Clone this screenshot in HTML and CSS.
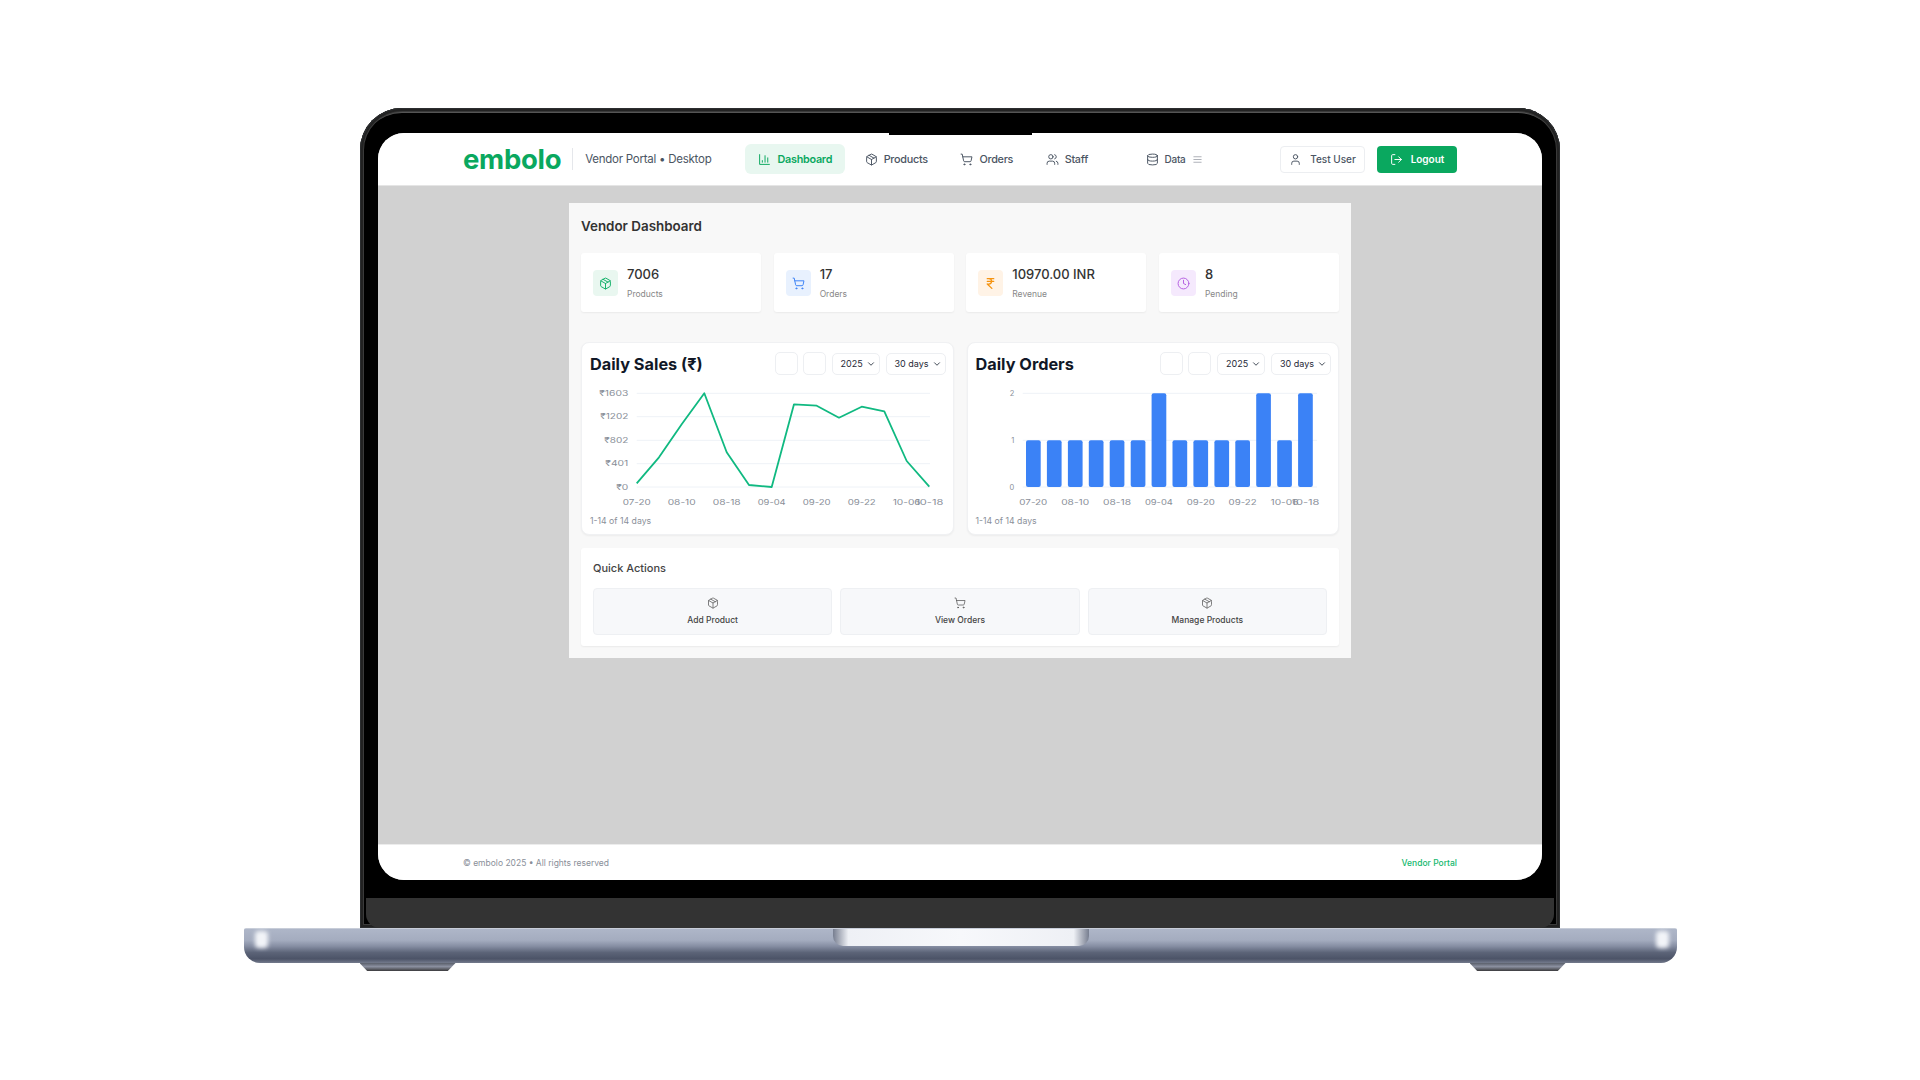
FILE: index.html
```html
<!DOCTYPE html>
<html lang="en">
<head>
  <meta charset="UTF-8">
  <title>embolo Vendor Dashboard</title>
  <link rel="stylesheet" href="styles.css">
</head>
<body>

<svg class="icon-defs" aria-hidden="true">
  <symbol id="i-chart" viewBox="0 0 24 24"><path d="M3 3v18h18M18 17V9M13 17V5M8 17v-3"/></symbol>
  <symbol id="i-package" viewBox="0 0 24 24"><path d="m7.5 4.27 9 5.15M21 8a2 2 0 0 0-1-1.73l-7-4a2 2 0 0 0-2 0l-7 4A2 2 0 0 0 3 8v8a2 2 0 0 0 1 1.73l7 4a2 2 0 0 0 2 0l7-4A2 2 0 0 0 21 16ZM3.3 7l8.7 5 8.7-5M12 22V12"/></symbol>
  <symbol id="i-cart" viewBox="0 0 24 24"><circle cx="8" cy="21" r="1"/><circle cx="19" cy="21" r="1"/><path d="M2.05 2.05h2l2.66 12.42a2 2 0 0 0 2 1.58h9.78a2 2 0 0 0 1.95-1.57l1.65-7.43H5.12"/></symbol>
  <symbol id="i-users" viewBox="0 0 24 24"><path d="M16 21v-2a4 4 0 0 0-4-4H6a4 4 0 0 0-4 4v2M22 21v-2a4 4 0 0 0-3-3.87M16 3.13a4 4 0 0 1 0 7.75"/><circle cx="9" cy="7" r="4"/></symbol>
  <symbol id="i-database" viewBox="0 0 24 24"><ellipse cx="12" cy="5" rx="9" ry="3"/><path d="M3 5v14a9 3 0 0 0 18 0V5M3 12a9 3 0 0 0 18 0"/></symbol>
  <symbol id="i-menu" viewBox="0 0 24 24"><path d="M4 6h16M4 12h16M4 18h16"/></symbol>
  <symbol id="i-user" viewBox="0 0 24 24"><path d="M19 21v-2a4 4 0 0 0-4-4H9a4 4 0 0 0-4 4v2"/><circle cx="12" cy="7" r="4"/></symbol>
  <symbol id="i-logout" viewBox="0 0 24 24"><path d="M9 21H5a2 2 0 0 1-2-2V5a2 2 0 0 1 2-2h4M16 17l5-5-5-5M21 12H9"/></symbol>
  <symbol id="i-rupee" viewBox="0 0 24 24"><path d="M6 3h12M6 8h12M6 13l8.5 8M6 13h3M9 13c6.667 0 6.667-10 0-10"/></symbol>
  <symbol id="i-clock" viewBox="0 0 24 24"><circle cx="12" cy="12" r="10"/><path d="M12 6v6l4 2"/></symbol>
  <symbol id="i-chevron" viewBox="0 0 24 24"><path d="m6 9 6 6 6-6"/></symbol>
</svg>

<div class="laptop">
  <div class="lid">
    <div class="camera-notch"></div>
    <div class="screen">

      <header class="topbar">
        <span class="logo">embolo</span>
        <span class="portal-name">Vendor Portal • Desktop</span>
        <nav class="nav">
          <a class="nav-item active"><svg class="icon"><use href="#i-chart"/></svg>Dashboard</a>
          <a class="nav-item"><svg class="icon"><use href="#i-package"/></svg>Products</a>
          <a class="nav-item"><svg class="icon"><use href="#i-cart"/></svg>Orders</a>
          <a class="nav-item"><svg class="icon"><use href="#i-users"/></svg>Staff</a>
          <a class="nav-item nav-data"><svg class="icon"><use href="#i-database"/></svg>Data<svg class="icon icon-small"><use href="#i-menu"/></svg></a>
        </nav>
        <div class="account">
          <button class="btn-user"><svg class="icon"><use href="#i-user"/></svg>Test User</button>
          <button class="btn-logout"><svg class="icon"><use href="#i-logout"/></svg>Logout</button>
        </div>
      </header>

      <main class="main">
        <div class="panel">
          <h1 class="panel-title">Vendor Dashboard</h1>

          <div class="stats">
            <div class="stat">
              <div class="stat-icon green"><svg class="icon"><use href="#i-package"/></svg></div>
              <div><div class="stat-value">7006</div><div class="stat-label">Products</div></div>
            </div>
            <div class="stat">
              <div class="stat-icon blue"><svg class="icon"><use href="#i-cart"/></svg></div>
              <div><div class="stat-value">17</div><div class="stat-label">Orders</div></div>
            </div>
            <div class="stat">
              <div class="stat-icon orange"><svg class="icon"><use href="#i-rupee"/></svg></div>
              <div><div class="stat-value">10970.00 INR</div><div class="stat-label">Revenue</div></div>
            </div>
            <div class="stat">
              <div class="stat-icon purple"><svg class="icon"><use href="#i-clock"/></svg></div>
              <div><div class="stat-value">8</div><div class="stat-label">Pending</div></div>
            </div>
          </div>

          <div class="charts">
            <section class="chart-card">
              <div class="chart-head">
                <h2 class="chart-title">Daily Sales (₹)</h2>
                <span class="square-btn"></span>
                <span class="square-btn"></span>
                <span class="picker picker-year">2025<svg class="icon chevron"><use href="#i-chevron"/></svg></span>
                <span class="picker picker-range">30 days<svg class="icon chevron"><use href="#i-chevron"/></svg></span>
              </div>
              <svg class="chart" viewBox="0 0 355 125">
                <g class="grid">
                  <path d="M46.7 8.3H340M46.7 31.7H340M46.7 55.3H340M46.7 78.7H340M46.7 102H340"/>
                </g>
                <g class="ticks y-ticks">
                  <text x="38.3" y="11" textLength="29" lengthAdjust="spacingAndGlyphs">₹1603</text>
                  <text x="38.3" y="34.4" textLength="28" lengthAdjust="spacingAndGlyphs">₹1202</text>
                  <text x="38.3" y="58" textLength="24" lengthAdjust="spacingAndGlyphs">₹802</text>
                  <text x="38.3" y="81.4" textLength="23" lengthAdjust="spacingAndGlyphs">₹401</text>
                  <text x="38.3" y="104.7" textLength="12" lengthAdjust="spacingAndGlyphs">₹0</text>
                </g>
                <polyline class="sales-line" points="46.7,98.3 69,72.3 91.7,39.3 114.3,8.3 136.7,67.3 159,100 181.7,102 204,19.3 226.7,20.7 249,32.7 271.7,21.7 294.3,26.3 316.7,76 339.3,101.7"/>
                <g class="ticks x-ticks">
                  <text x="46.7" y="119.7" textLength="28" lengthAdjust="spacingAndGlyphs">07-20</text>
                  <text x="91.7" y="119.7" textLength="28" lengthAdjust="spacingAndGlyphs">08-10</text>
                  <text x="136.7" y="119.7" textLength="28" lengthAdjust="spacingAndGlyphs">08-18</text>
                  <text x="181.7" y="119.7" textLength="28" lengthAdjust="spacingAndGlyphs">09-04</text>
                  <text x="226.7" y="119.7" textLength="28" lengthAdjust="spacingAndGlyphs">09-20</text>
                  <text x="271.7" y="119.7" textLength="28" lengthAdjust="spacingAndGlyphs">09-22</text>
                  <text x="316.7" y="119.7" textLength="28" lengthAdjust="spacingAndGlyphs">10-06</text>
                  <text x="339.3" y="119.7" textLength="28" lengthAdjust="spacingAndGlyphs">10-18</text>
                </g>
              </svg>
              <div class="chart-foot">1-14 of 14 days</div>
            </section>

            <section class="chart-card">
              <div class="chart-head">
                <h2 class="chart-title">Daily Orders</h2>
                <span class="square-btn"></span>
                <span class="square-btn"></span>
                <span class="picker picker-year">2025<svg class="icon chevron"><use href="#i-chevron"/></svg></span>
                <span class="picker picker-range">30 days<svg class="icon chevron"><use href="#i-chevron"/></svg></span>
              </div>
              <svg class="chart" viewBox="0 0 355 125">
                <g class="grid">
                  <path d="M46.7 8.3H341M46.7 55.3H341M46.7 102H341"/>
                </g>
                <g class="ticks y-ticks">
                  <text x="38.3" y="11">2</text>
                  <text x="38.3" y="58">1</text>
                  <text x="38.3" y="104.7">0</text>
                </g>
                <g class="bars">
                  <rect x="50" y="55.3" width="14.7" height="46.7" rx="2"/>
                  <rect x="70.9" y="55.3" width="14.7" height="46.7" rx="2"/>
                  <rect x="91.9" y="55.3" width="14.7" height="46.7" rx="2"/>
                  <rect x="112.8" y="55.3" width="14.7" height="46.7" rx="2"/>
                  <rect x="133.7" y="55.3" width="14.7" height="46.7" rx="2"/>
                  <rect x="154.7" y="55.3" width="14.7" height="46.7" rx="2"/>
                  <rect x="175.6" y="8.3" width="14.7" height="93.7" rx="2"/>
                  <rect x="196.5" y="55.3" width="14.7" height="46.7" rx="2"/>
                  <rect x="217.4" y="55.3" width="14.7" height="46.7" rx="2"/>
                  <rect x="238.4" y="55.3" width="14.7" height="46.7" rx="2"/>
                  <rect x="259.3" y="55.3" width="14.7" height="46.7" rx="2"/>
                  <rect x="280.2" y="8.3" width="14.7" height="93.7" rx="2"/>
                  <rect x="301.2" y="55.3" width="14.7" height="46.7" rx="2"/>
                  <rect x="322.1" y="8.3" width="14.7" height="93.7" rx="2"/>
                </g>
                <g class="ticks x-ticks">
                  <text x="57.3" y="119.7" textLength="28" lengthAdjust="spacingAndGlyphs">07-20</text>
                  <text x="99.2" y="119.7" textLength="28" lengthAdjust="spacingAndGlyphs">08-10</text>
                  <text x="141" y="119.7" textLength="28" lengthAdjust="spacingAndGlyphs">08-18</text>
                  <text x="182.9" y="119.7" textLength="28" lengthAdjust="spacingAndGlyphs">09-04</text>
                  <text x="224.8" y="119.7" textLength="28" lengthAdjust="spacingAndGlyphs">09-20</text>
                  <text x="266.6" y="119.7" textLength="28" lengthAdjust="spacingAndGlyphs">09-22</text>
                  <text x="308.5" y="119.7" textLength="28" lengthAdjust="spacingAndGlyphs">10-06</text>
                  <text x="329.4" y="119.7" textLength="28" lengthAdjust="spacingAndGlyphs">10-18</text>
                </g>
              </svg>
              <div class="chart-foot">1-14 of 14 days</div>
            </section>
          </div>

          <section class="quick">
            <h3 class="quick-title">Quick Actions</h3>
            <div class="quick-grid">
              <a class="quick-btn"><svg class="icon"><use href="#i-package"/></svg>Add Product</a>
              <a class="quick-btn"><svg class="icon"><use href="#i-cart"/></svg>View Orders</a>
              <a class="quick-btn"><svg class="icon"><use href="#i-package"/></svg>Manage Products</a>
            </div>
          </section>
        </div>
      </main>

      <footer class="footer">
        <span class="copyright">© embolo 2025 • All rights reserved</span>
        <a class="footer-link">Vendor Portal</a>
      </footer>
    </div>
    <div class="chin"></div>
  </div>

  <div class="base">
    <div class="base-cap base-cap-left"></div>
    <div class="base-notch"></div>
    <div class="base-cap base-cap-right"></div>
    <div class="foot foot-left"></div>
    <div class="foot foot-right"></div>
  </div>
</div>

</body>
</html>
```

FILE: styles.css
```css
* {
  box-sizing: border-box;
}
body {
  margin: 0;
  height: 1080px;
  padding-top: 108px;
  background: #fff;
  font-family: Inter, "Noto Sans", sans-serif;
  color: #333;
  overflow: hidden;
}
.icon-defs {
  display: none;
}
.icon {
  width: 13px;
  height: 13px;
  flex: none;
  fill: none;
  stroke: currentColor;
  stroke-width: 1.8;
  stroke-linecap: round;
  stroke-linejoin: round;
}
.icon-small {
  width: 11px;
  height: 11px;
  color: #8a8f99;
  stroke-width: 1.5;
}

/* laptop frame */
.laptop {
  display: flex;
  flex-direction: column;
  align-items: center;
}
.lid {
  position: relative;
  width: 1200px;
  height: 820px;
  padding: 25px 18px 0;
  background: #000;
  border-radius: 42px 42px 0 0;
  box-shadow: inset 0 0 0 1px #2c2e30, inset 0 0 0 3px #222, inset 0 0 0 4px #3a3a3a, inset 0 5px 0 0 #555;
}
.camera-notch {
  position: absolute;
  top: 24px;
  left: 529px;
  width: 143px;
  height: 3px;
  background: #000;
  z-index: 2;
}
.screen {
  display: flex;
  flex-direction: column;
  height: 747px;
  background: #d1d1d1;
  border-radius: 26px;
  overflow: hidden;
}
.chin {
  height: 30px;
  margin: 18px -12px 0;
  background: #333;
  border-radius: 0 0 14px 14px;
}
.base {
  position: relative;
  width: 1433px;
  height: 35px;
  border-radius: 2px 2px 16px 16px;
  background: linear-gradient(#dfe2e8 0, #aeb6c8 3%, #a4acbf 35%, #868ea3 52%, #5c6478 70%, #4c5367 88%, #737a8c 100%);
}
.base-cap {
  position: absolute;
  top: 3px;
  width: 13px;
  height: 17px;
  border-radius: 4px;
  background: #f2f4f8;
  filter: blur(2px);
}
.base-cap-left {
  left: 11px;
}
.base-cap-right {
  right: 8px;
}
.base-notch {
  position: absolute;
  top: 1px;
  left: 589px;
  width: 256px;
  height: 17px;
  border-radius: 0 0 10px 10px;
  background: linear-gradient(90deg, #777e90, #eef0f5 6%, #f7f8fb 50%, #eef0f5 94%, #777e90);
}
.foot {
  position: absolute;
  top: 35px;
  width: 96px;
  height: 8px;
  clip-path: polygon(0 0, 100% 0, 92% 100%, 8% 100%);
  background: linear-gradient(#5a5f6b, #8b90a0 45%, #3a3a3c);
}
.foot-left {
  left: 116px;
}
.foot-right {
  left: 1226px;
}

/* topbar */
.topbar {
  display: flex;
  align-items: center;
  flex: none;
  height: 53px;
  padding: 0 85px;
  background: #fff;
  border-bottom: 1px solid #e5e5e5;
}
.logo {
  font-size: 27.5px;
  font-weight: 700;
  letter-spacing: -0.3px;
  color: #0aa85f;
  padding-right: 11px;
  border-right: 1px solid #e5e7eb;
  line-height: 22px;
}
.portal-name {
  margin-left: 12px;
  font-size: 11.5px;
  letter-spacing: -0.25px;
  color: #4b5563;
}
.nav {
  display: flex;
  align-items: center;
  gap: 6.5px;
  margin-left: 34px;
}
.nav-item {
  display: flex;
  align-items: center;
  gap: 6px;
  height: 30px;
  padding: 0 13px;
  border-radius: 6px;
  font-size: 10.8px;
  letter-spacing: -0.25px;
  font-weight: 500;
  color: #4b5563;
}
.nav-item.active {
  background: #e8f7f0;
  color: #0aa85f;
  font-weight: 600;
}
.nav-data {
  margin-left: 25px;
  font-size: 10px;
}
.account {
  display: flex;
  gap: 12px;
  margin-left: auto;
}
.btn-user,
.btn-logout {
  display: flex;
  align-items: center;
  justify-content: center;
  gap: 8px;
  height: 27px;
  border-radius: 4px;
  font-family: inherit;
  font-size: 10px;
  font-weight: 500;
}
.btn-user {
  width: 85px;
  background: #fff;
  border: 1px solid #eceef1;
  color: #4b5563;
}
.btn-logout {
  width: 80px;
  background: #0aa85f;
  border: 0;
  color: #fff;
  font-weight: 600;
}

/* main */
.main {
  flex: 1;
  padding-top: 17px;
}
.panel {
  width: 782px;
  margin: 0 auto;
  padding: 12px;
  background: #f8f8f8;
}
.panel-title {
  margin: 0 0 16px;
  font-size: 13.4px;
  line-height: 22px;
  font-weight: 600;
  color: #333;
}
.stats {
  display: grid;
  grid-template-columns: repeat(4, 1fr);
  gap: 12.5px;
}
.stat {
  display: flex;
  align-items: center;
  gap: 9px;
  height: 59px;
  padding: 0 12px;
  background: #fff;
  border-radius: 3px;
  box-shadow: 0 1px 2px rgba(0, 0, 0, 0.06);
}
.stat-icon {
  display: flex;
  align-items: center;
  justify-content: center;
  width: 25px;
  height: 26px;
  margin-top: 1px;
  border-radius: 4px;
}
.green { background: #e9f7f0; color: #10b068; }
.blue { background: #e8f1fe; color: #3b82f6; }
.orange { background: #fff3e6; color: #f59310; }
.purple { background: #f5e9fd; color: #b45ee0; }
.orange .icon {
  stroke-width: 2.4;
}
.stat-value {
  font-size: 13px;
  line-height: 16px;
  font-weight: 500;
  color: #333;
}
.stat-label {
  margin-top: 6px;
  font-size: 8.5px;
  line-height: 12px;
  color: #888;
}

/* charts */
.charts {
  display: grid;
  grid-template-columns: repeat(2, minmax(0, 1fr));
  gap: 13px;
  margin-top: 30px;
}
.chart-card {
  height: 193px;
  padding: 9px 7px 0 8px;
  background: #fff;
  border: 1px solid #f0f1f3;
  border-radius: 8px;
  box-shadow: 0 1px 2px rgba(0, 0, 0, 0.05);
}
.chart-head {
  display: flex;
  align-items: center;
  height: 23px;
}
.chart-title {
  margin: 0 auto 0 0;
  font-size: 16.3px;
  font-weight: 700;
  color: #111827;
}
.square-btn {
  width: 23px;
  height: 23px;
  margin-right: 5px;
  border: 1px solid #edeff2;
  border-radius: 5px;
  background: #fff;
}
.picker {
  display: flex;
  align-items: center;
  justify-content: space-between;
  height: 22px;
  padding: 0 3px 0 8px;
  border: 1px solid #edeff2;
  border-radius: 5px;
  font-size: 9px;
  color: #1f2937;
}
.picker-year {
  width: 48px;
  margin-left: 1px;
}
.picker-range {
  width: 60px;
  margin-left: 6px;
}
.chevron {
  width: 10px;
  height: 10px;
  stroke-width: 2;
}
.chart {
  display: block;
  width: 355px;
  height: 125px;
  margin-top: 10px;
}
.grid path {
  fill: none;
  stroke: #eef2f7;
  stroke-width: 1;
}
.ticks text {
  font-size: 7.5px;
  font-family: Inter, sans-serif;
  fill: #8a8f99;
}
.y-ticks text {
  text-anchor: end;
}
.x-ticks text {
  text-anchor: middle;
}
.sales-line {
  fill: none;
  stroke: #10b981;
  stroke-width: 1.8;
  stroke-linejoin: round;
}
.bars rect {
  fill: #3b82f6;
}
.chart-foot {
  margin-top: 5px;
  font-size: 8.7px;
  line-height: 12px;
  color: #8a8f99;
}

/* quick actions */
.quick {
  margin-top: 13px;
  padding: 12px;
  height: 98px;
  background: #fff;
  border-radius: 3px;
  box-shadow: 0 1px 2px rgba(0, 0, 0, 0.06);
}
.quick-title {
  margin: 0 0 12px;
  font-size: 11px;
  line-height: 16px;
  font-weight: 500;
  color: #444;
}
.quick-grid {
  display: grid;
  grid-template-columns: repeat(3, 1fr);
  gap: 8px;
}
.quick-btn {
  display: flex;
  flex-direction: column;
  align-items: center;
  gap: 5px;
  height: 47px;
  padding-top: 8px;
  background: #f7f8fa;
  border: 1px solid #eef0f3;
  border-radius: 4px;
  font-size: 8.5px;
  line-height: 12px;
  font-weight: 500;
  color: #444;
}
.quick-btn .icon {
  width: 12px;
  height: 12px;
  color: #555;
  stroke-width: 1.5;
}

/* footer */
.footer {
  display: flex;
  align-items: center;
  justify-content: space-between;
  flex: none;
  height: 36px;
  padding: 0 85px;
  background: #fff;
  border-top: 1px solid #ececec;
  font-size: 8.5px;
}
.copyright {
  color: #8a8f99;
}
.footer-link {
  color: #14b86e;
  font-weight: 500;
}
```
